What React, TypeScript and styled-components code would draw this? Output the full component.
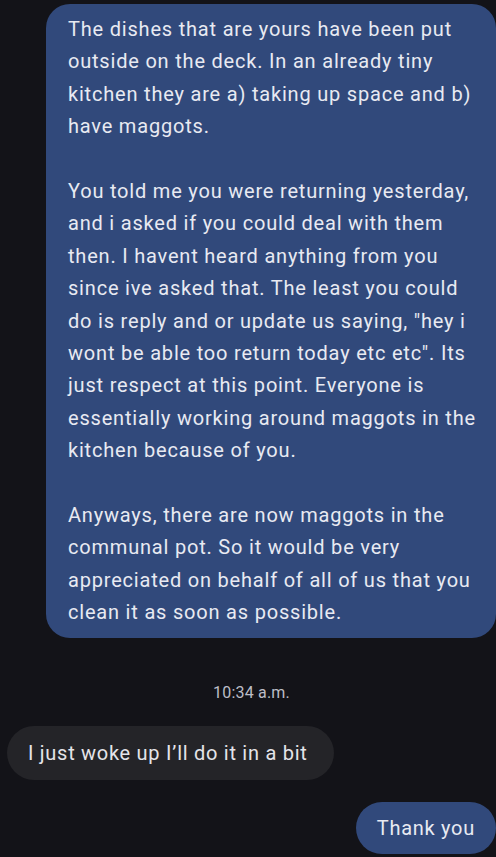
import React from "react";
import styled, { createGlobalStyle } from "styled-components";

const Global = createGlobalStyle`
  html, body { margin: 0; padding: 0; background: #131318; }
  body { font-family: Roboto, "Noto Sans", "Liberation Sans", sans-serif; -webkit-font-smoothing: antialiased; }
`;

const Screen = styled.div`
  width: 496px;
  height: 857px;
  overflow: hidden;
  background: #131318;
  display: flex;
  flex-direction: column;
  padding-top: 4px;
  box-sizing: border-box;
`;

const Row = styled.div<{ $side: "left" | "right"; $gap: number }>`
  display: flex;
  justify-content: ${(p) => (p.$side === "right" ? "flex-end" : "flex-start")};
  padding-left: ${(p) => (p.$side === "left" ? "7px" : "0")};
  margin-top: ${(p) => p.$gap}px;
`;

const LongBubble = styled.div`
  margin-left: 46px;
  flex: 1;
  background: #31497b;
  color: #e8eaf2;
  border-radius: 24px;
  padding: 9px 10px 9px 22px;
  font-size: 20px;
  letter-spacing: 0.8px;
  line-height: 32.4px;
`;

const Para = styled.p`
  margin: 0;
  & + & { margin-top: 32.4px; }
`;

const Line = styled.span`
  display: block;
  white-space: nowrap;
`;

const Pill = styled.div<{ $variant: "in" | "out" }>`
  background: ${(p) => (p.$variant === "in" ? "#242428" : "#31497b")};
  color: ${(p) => (p.$variant === "in" ? "#e4e4ea" : "#e8eaf2")};
  font-size: 20px;
  letter-spacing: 0.72px;
  line-height: 24px;
  height: ${(p) => (p.$variant === "in" ? 54 : 52)}px;
  box-sizing: border-box;
  display: flex;
  align-items: center;
  white-space: nowrap;
  border-radius: 27px;
  padding: ${(p) => (p.$variant === "in" ? "0 27px 0 21px" : "0 21px 0 21px")};
`;

const Stamp = styled.div`
  margin-top: 43px;
  text-align: center;
  padding-left: 7px;
  color: #bdbec6;
  font-size: 16px;
  letter-spacing: 0.2px;
  line-height: 24px;
`;

const paragraphs = [
  [
    "The dishes that are yours have been put",
    "outside on the deck. In an already tiny",
    "kitchen they are a) taking up space and b)",
    "have maggots.",
  ],
  [
    "You told me you were returning yesterday,",
    "and i asked if you could deal with them",
    "then. I havent heard anything from you",
    "since ive asked that. The least you could",
    "do is reply and or update us saying, \"hey i",
    "wont be able too return today etc etc\". Its",
    "just respect at this point. Everyone is",
    "essentially working around maggots in the",
    "kitchen because of you.",
  ],
  [
    "Anyways, there are now maggots in the",
    "communal pot. So it would be very",
    "appreciated on behalf of all of us that you",
    "clean it as soon as possible.",
  ],
];

export default function App() {
  return (
    <>
      <Global />
      <Screen>
        <Row $side="right" $gap={0}>
          <LongBubble>
            {paragraphs.map((p, i) => (
              <Para key={i}>
                {p.map((l, j) => (
                  <Line key={j}>{l}</Line>
                ))}
              </Para>
            ))}
          </LongBubble>
        </Row>
        <Stamp>10:34 a.m.</Stamp>
        <Row $side="left" $gap={21}>
          <Pill $variant="in">I just woke up I’ll do it in a bit</Pill>
        </Row>
        <Row $side="right" $gap={22}>
          <Pill $variant="out">Thank you</Pill>
        </Row>
      </Screen>
    </>
  );
}
